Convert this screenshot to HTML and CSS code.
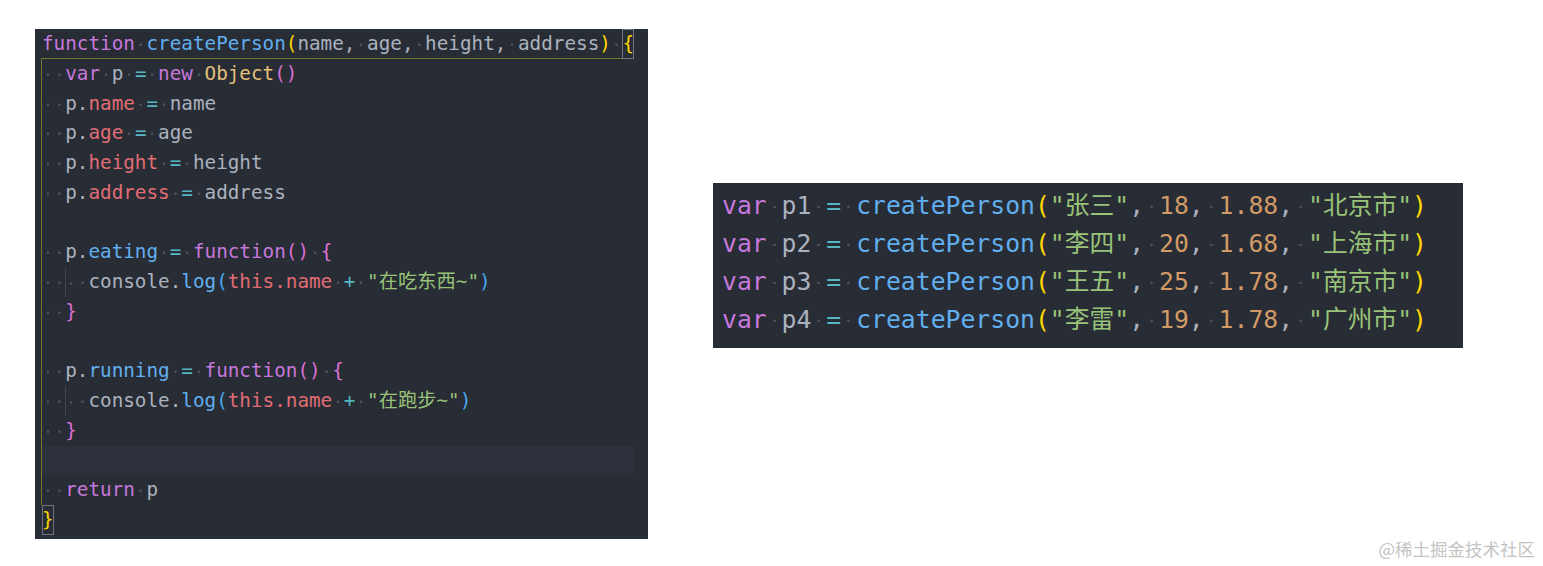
FILE: index.html
```html
<!DOCTYPE html>
<html lang="zh">
<head>
<meta charset="utf-8">
<title>createPerson</title>
<link rel="stylesheet" href="styles.css">
</head>
<body>
<div class="page">
  <div class="editor left">
    <div class="line"><span class="k">function</span><i class="w"> </i><span class="f">createPerson</span><span class="b1">(</span>name,<i class="w"> </i>age,<i class="w"> </i>height,<i class="w"> </i>address<span class="b1">)</span><i class="w"> </i><span class="b1 match">{</span></div>
    <div class="scope">
      <div class="line"><i class="w"> </i><i class="w"> </i><span class="k">var</span><i class="w"> </i>p<i class="w"> </i><span class="o">=</span><i class="w"> </i><span class="k">new</span><i class="w"> </i><span class="t">Object</span><span class="b2">()</span></div>
      <div class="line"><i class="w"> </i><i class="w"> </i>p.<span class="p">name</span><i class="w"> </i><span class="o">=</span><i class="w"> </i>name</div>
      <div class="line"><i class="w"> </i><i class="w"> </i>p.<span class="p">age</span><i class="w"> </i><span class="o">=</span><i class="w"> </i>age</div>
      <div class="line"><i class="w"> </i><i class="w"> </i>p.<span class="p">height</span><i class="w"> </i><span class="o">=</span><i class="w"> </i>height</div>
      <div class="line"><i class="w"> </i><i class="w"> </i>p.<span class="p">address</span><i class="w"> </i><span class="o">=</span><i class="w"> </i>address</div>
      <div class="line"></div>
      <div class="line"><i class="w"> </i><i class="w"> </i>p.<span class="f">eating</span><i class="w"> </i><span class="o">=</span><i class="w"> </i><span class="k">function</span><span class="b2">()</span><i class="w"> </i><span class="b2">{</span></div>
      <div class="line"><i class="w"> </i><i class="w"> </i><i class="w g"> </i><i class="w"> </i>console.<span class="f">log</span><span class="b3">(</span><span class="p">this.name</span><i class="w"> </i><span class="o">+</span><i class="w"> </i><span class="s">"在吃东西~"</span><span class="b3">)</span></div>
      <div class="line"><i class="w"> </i><i class="w"> </i><span class="b2">}</span></div>
      <div class="line"></div>
      <div class="line"><i class="w"> </i><i class="w"> </i>p.<span class="f">running</span><i class="w"> </i><span class="o">=</span><i class="w"> </i><span class="k">function</span><span class="b2">()</span><i class="w"> </i><span class="b2">{</span></div>
      <div class="line"><i class="w"> </i><i class="w"> </i><i class="w g"> </i><i class="w"> </i>console.<span class="f">log</span><span class="b3">(</span><span class="p">this.name</span><i class="w"> </i><span class="o">+</span><i class="w"> </i><span class="s">"在跑步~"</span><span class="b3">)</span></div>
      <div class="line"><i class="w"> </i><i class="w"> </i><span class="b2">}</span></div>
      <div class="line current"></div>
      <div class="line"><i class="w"> </i><i class="w"> </i><span class="k">return</span><i class="w"> </i>p</div>
    </div>
    <div class="line"><span class="b1 match">}</span></div>
  </div>

  <div class="editor right">
    <div class="line"><span class="k">var</span><i class="w"> </i>p1<i class="w"> </i><span class="o">=</span><i class="w"> </i><span class="f">createPerson</span><span class="b1">(</span><span class="s">"张三"</span>,<i class="w"> </i><span class="n">18</span>,<i class="w"> </i><span class="n">1.88</span>,<i class="w"> </i><span class="s">"北京市"</span><span class="b1">)</span></div>
    <div class="line"><span class="k">var</span><i class="w"> </i>p2<i class="w"> </i><span class="o">=</span><i class="w"> </i><span class="f">createPerson</span><span class="b1">(</span><span class="s">"李四"</span>,<i class="w"> </i><span class="n">20</span>,<i class="w"> </i><span class="n">1.68</span>,<i class="w"> </i><span class="s">"上海市"</span><span class="b1">)</span></div>
    <div class="line"><span class="k">var</span><i class="w"> </i>p3<i class="w"> </i><span class="o">=</span><i class="w"> </i><span class="f">createPerson</span><span class="b1">(</span><span class="s">"王五"</span>,<i class="w"> </i><span class="n">25</span>,<i class="w"> </i><span class="n">1.78</span>,<i class="w"> </i><span class="s">"南京市"</span><span class="b1">)</span></div>
    <div class="line"><span class="k">var</span><i class="w"> </i>p4<i class="w"> </i><span class="o">=</span><i class="w"> </i><span class="f">createPerson</span><span class="b1">(</span><span class="s">"李雷"</span>,<i class="w"> </i><span class="n">19</span>,<i class="w"> </i><span class="n">1.78</span>,<i class="w"> </i><span class="s">"广州市"</span><span class="b1">)</span></div>
  </div>
</div>
<div class="watermark">@稀土掘金技术社区</div>
</body>
</html>
```

FILE: styles.css
```css
html, body {
  margin: 0;
  background: #ffffff;
}
body {
  width: 1543px;
  height: 566px;
  position: relative;
  overflow: hidden;
}
.page {
  display: flex;
  align-items: flex-start;
  gap: 65px;
  padding: 29px 0 0 35px;
}
.editor {
  background: #282c34;
  color: #abb2bf;
  font-family: "DejaVu Sans Mono", "Noto Sans CJK SC", monospace;
}
.line {
  white-space: pre;
}
.left {
  width: 606px;
  height: 510px;
  padding-left: 7px;
  font-size: 19.3px;
}
.left .line {
  height: 29.75px;
  line-height: 29.75px;
}
.right {
  width: 741px;
  height: 161px;
  margin-top: 154px;
  padding: 4px 0 0 9px;
  font-size: 24.75px;
}
.right .line {
  height: 38px;
  line-height: 38px;
}
.scope {
  width: 51ch;
  margin: -1px 0 0 -1px;
  border-left: 1px solid #77772c;
  border-top: 1px solid #77772c;
}
.current {
  background: #2c313b;
}
.w {
  font-style: normal;
  background: radial-gradient(circle at 50% 55%, #4a505c 0 1px, transparent 1.6px);
}
.g {
  display: inline-block;
  box-shadow: inset 1px 0 0 #3e4451;
}
.match {
  display: inline-block;
  box-shadow: inset 0 0 0 1px #6e737d;
}
.k { color: #c678dd; }
.f { color: #61afef; }
.p { color: #e06c75; }
.o { color: #56b6c2; }
.s { color: #98c379; }
.n { color: #d19a66; }
.t { color: #e5c07b; }
.b1 { color: #ffd700; }
.b2 { color: #da70d6; }
.b3 { color: #4aa8f0; }
.watermark {
  position: absolute;
  right: 8px;
  bottom: 6px;
  font-family: "Noto Sans CJK SC", sans-serif;
  font-size: 17.5px;
  line-height: 22px;
  color: #c4c4c4;
}
```
